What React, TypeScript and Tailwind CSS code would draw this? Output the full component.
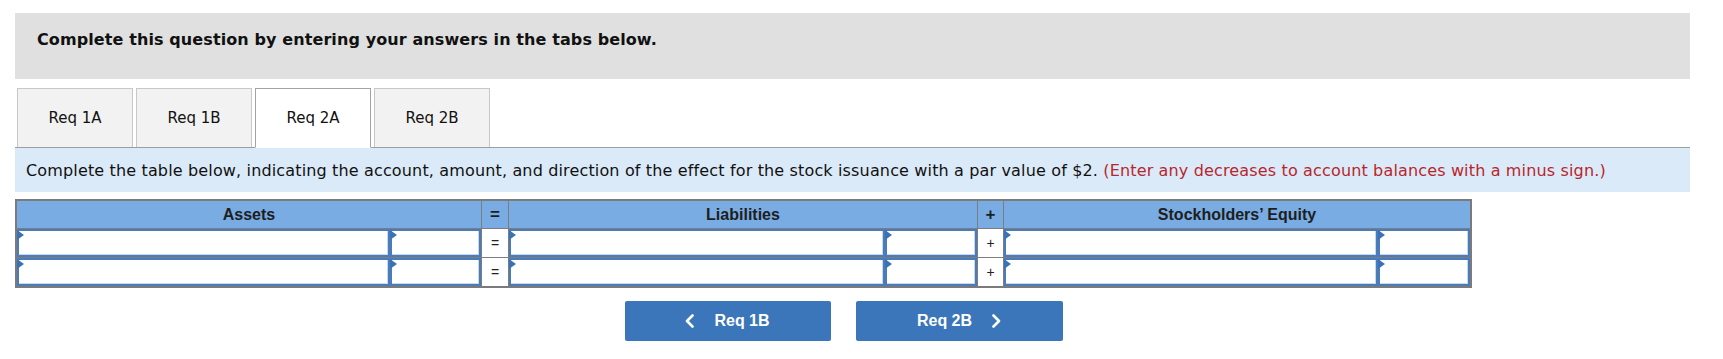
import React from "react";

const tabs = ["Req 1A", "Req 1B", "Req 2A", "Req 2B"];
const active = "Req 2A";

const grid =
  "grid grid-cols-[373px_91px_28px_376px_92px_27px_374px_92px]";

function Pick() {
  // dropdown marker sitting in the corner of an answer box
  return (
    <span className="absolute left-0 top-[1px] h-0 w-0 border-y-[5px] border-l-[7px] border-y-transparent border-l-[#3a72b8]" />
  );
}

function Box({ pick = true }: { pick?: boolean }) {
  return (
    <div className="relative h-full">
      <div className="h-full border-2 border-[#4a7cbb] bg-white shadow-[inset_-1px_-1px_0_#c9d9ec]" />
      {pick && <Pick />}
    </div>
  );
}

function Sign({ s }: { s: string }) {
  return (
    <div className="flex h-full items-center justify-center border-x border-[#7d7d7d] bg-white font-['Liberation_Sans',Arial,sans-serif] text-[14px] text-[#222]">
      {s}
    </div>
  );
}

function Chevron({ dir }: { dir: "left" | "right" }) {
  return (
    <svg width="9" height="14" viewBox="0 0 9 14" fill="none">
      <polyline
        points={dir === "left" ? "7.5,1.5 2,7 7.5,12.5" : "1.5,1.5 7,7 1.5,12.5"}
        stroke="white"
        strokeWidth="2.6"
        strokeLinecap="round"
        strokeLinejoin="round"
      />
    </svg>
  );
}

export default function App() {
  return (
    <div className="min-h-[359px] bg-white font-['DejaVu_Sans',Verdana,sans-serif] text-[#111]">
      <div className="w-[1705px] px-[15px] pt-[13px]">
        <div className="h-[66px] bg-[#e0e0e0] pl-[22px] pt-[16px]">
          <p className="text-[16px] font-bold leading-[22px] tracking-[0.1px]">
            Complete this question by entering your answers in the tabs below.
          </p>
        </div>

        <div className="mt-[9px] flex gap-[3px] border-b border-[#9e9e9e] pl-[2px]">
          {tabs.map((t) => (
            <div
              key={t}
              className={
                t === active
                  ? "-mb-px flex h-[60px] w-[116px] items-center justify-center border border-b-white border-[#a3a3a3] bg-white text-[15px]"
                  : "flex h-[59px] w-[116px] items-center justify-center border border-b-0 border-[#c8c8c8] bg-[#f2f2f2] text-[15px]"
              }
            >
              {t}
            </div>
          ))}
        </div>

        <div className="flex h-[44px] items-center bg-[#dbeaf8] pl-[11px] pt-[1px] text-[16px] tracking-[0.15px]">
          <p>
            Complete the table below, indicating the account, amount, and direction of the effect for the stock issuance with a par value of $2.{" "}
            <span className="text-[#b8262c]">
              (Enter any decreases to account balances with a minus sign.)
            </span>
          </p>
        </div>

        <div className="mt-[7px] w-[1457px] border-2 border-[#7b7b7b] font-['Liberation_Sans',Arial,sans-serif]">
          <div className={`${grid} h-[27px] bg-[#79ace3] text-[16px] font-bold text-[#1e1e1e]`}>
            <div className="col-span-2 flex items-center justify-center">Assets</div>
            <div className="flex items-center justify-center border-x border-[#7d7d7d] text-[17px]">=</div>
            <div className="col-span-2 flex items-center justify-center">Liabilities</div>
            <div className="flex items-center justify-center border-x border-[#7d7d7d] text-[17px]">+</div>
            <div className="col-span-2 flex items-center justify-center">Stockholders’ Equity</div>
          </div>
          {[0, 1].map((r) => (
            <div key={r} className={`${grid} h-[29px] border-t border-[#7d7d7d]`}>
              <Box />
              <Box />
              <Sign s="=" />
              <Box />
              <Box />
              <Sign s="+" />
              <Box />
              <Box />
            </div>
          ))}
        </div>

        <div className="mt-[13px] flex justify-center gap-[25px] pr-[18px] font-['Liberation_Sans',Arial,sans-serif] text-[16px] font-bold text-white">
          <button className="flex h-[40px] w-[206px] items-center justify-center gap-[20px] rounded-[2px] bg-[#3a76b9]">
            <Chevron dir="left" />
            <span>Req 1B</span>
          </button>
          <button className="flex h-[40px] w-[207px] items-center justify-center gap-[20px] rounded-[2px] bg-[#3a76b9]">
            <span>Req 2B</span>
            <Chevron dir="right" />
          </button>
        </div>
      </div>
    </div>
  );
}
